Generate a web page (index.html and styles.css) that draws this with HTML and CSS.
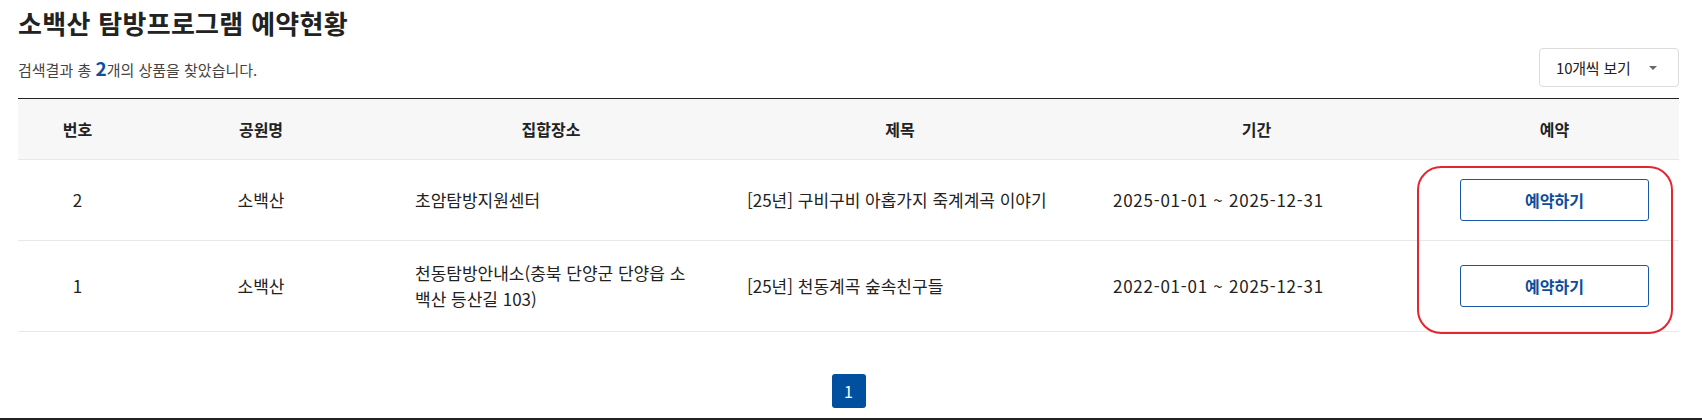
FILE: index.html
```html
<!DOCTYPE html>
<html lang="ko">
<head>
<meta charset="utf-8">
<title>소백산 탐방프로그램 예약현황</title>
<link rel="stylesheet" href="styles.css">
</head>
<body>
<div class="page">
  <h2 class="title">소백산 탐방프로그램 예약현황</h2>
  <div class="toolbar">
    <p class="count">검색결과 총 <strong>2</strong>개의 상품을 찾았습니다.</p>
    <div class="select">
      <span>10개씩 보기</span>
      <span class="caret"></span>
    </div>
  </div>
  <table class="list">
    <colgroup>
      <col class="c1"><col class="c2"><col class="c3"><col class="c4"><col class="c5"><col class="c6">
    </colgroup>
    <thead>
      <tr>
        <th>번호</th><th>공원명</th><th>집합장소</th><th>제목</th><th>기간</th><th>예약</th>
      </tr>
    </thead>
    <tbody>
      <tr class="r1">
        <td class="center">2</td>
        <td class="center">소백산</td>
        <td>초암탐방지원센터</td>
        <td>[25년] 구비구비 아홉가지 죽계계곡 이야기</td>
        <td class="date">2025-01-01 ~ 2025-12-31</td>
        <td class="center"><a class="btn" href="#">예약하기</a></td>
      </tr>
      <tr>
        <td class="center">1</td>
        <td class="center">소백산</td>
        <td>천동탐방안내소(충북 단양군 단양읍 소백산 등산길 103)</td>
        <td>[25년] 천동계곡 숲속친구들</td>
        <td class="date">2022-01-01 ~ 2025-12-31</td>
        <td class="center"><a class="btn" href="#">예약하기</a></td>
      </tr>
    </tbody>
  </table>
  <div class="pager">
    <a class="page-num active" href="#">1</a>
  </div>
  <div class="mark"></div>
</div>
<footer class="footer"></footer>
</body>
</html>
```
FILE: styles.css
```css
* { box-sizing: border-box; }
html, body { margin: 0; padding: 0; background: #fff; }
body {
  font-family: "Noto Sans CJK KR", "Noto Sans", sans-serif;
  color: #222;
  height: 420px;
  overflow: hidden;
}
.page {
  position: relative;
  padding: 6px 23px 0 18px;
}
.title {
  margin: 0;
  font-size: 26px;
  line-height: 34px;
  font-weight: 700;
  letter-spacing: 0.3px;
  color: #222;
}
.toolbar {
  margin-top: 8px;
  height: 39px;
  display: flex;
  align-items: center;
  justify-content: space-between;
}
.count {
  margin: 0;
  font-size: 15px;
  letter-spacing: 0;
  color: #444;
  line-height: 20px;
  padding-top: 3px;
}
.count strong {
  font-size: 19px;
  color: #0a4fa0;
  font-weight: 700;
}
.select {
  width: 140px;
  height: 39px;
  border: 1px solid #dcdcdc;
  border-radius: 4px;
  display: flex;
  align-items: center;
  justify-content: space-between;
  padding: 0 21px 0 16px;
  font-size: 15px;
  letter-spacing: -0.2px;
  color: #222;
}
.caret {
  width: 0; height: 0;
  border-left: 4px solid transparent;
  border-right: 4px solid transparent;
  border-top: 4px solid #666;
}
.list {
  margin-top: 11px;
  width: 1661px;
  border-collapse: collapse;
  table-layout: fixed;
  border-top: 1px solid #222;
}
.c1 { width: 119px; }
.c2 { width: 248px; }
.c3 { width: 332px; }
.c4 { width: 366px; }
.c5 { width: 347px; }
.c6 { width: 249px; }
.list th {
  background: #f7f7f7;
  height: 61px;
  font-size: 16px;
  font-weight: 700;
  border-bottom: 1px solid #e8e8e8;
  padding: 0;
}
.list td {
  font-size: 17px;
  line-height: 26px;
  padding: 19px 30px 19px;
  border-bottom: 1px solid #e8e8e8;
  vertical-align: middle;
}
.list tr.r1 td { height: 80px; }
.list td.center { text-align: center; padding-left: 0; padding-right: 0; }
.list td.date { padding-left: 30px; padding-right: 0; letter-spacing: 0.75px; }
.btn {
  display: inline-block;
  width: 189px;
  height: 42px;
  line-height: 40px;
  border: 1px solid #1a58a6;
  border-radius: 3px;
  color: #0d4c9c;
  font-size: 16px;
  font-weight: 700;
  letter-spacing: 0;
  text-decoration: none;
  text-align: center;
  vertical-align: middle;
}
.pager {
  width: 1661px;
  margin-top: 42px;
  display: flex;
  justify-content: center;
}
.page-num {
  width: 34px;
  height: 34px;
  border-radius: 3px;
  display: flex;
  align-items: center;
  justify-content: center;
  font-size: 16px;
  text-decoration: none;
  color: #fff;
  background: #0050a0;
}
.mark {
  position: absolute;
  left: 1417px;
  top: 166px;
  width: 256px;
  height: 168px;
  border: 2px solid #e52631;
  border-radius: 24px;
  pointer-events: none;
}
.footer {
  margin-top: 10px;
  height: 20px;
  background: #222;
}
```
